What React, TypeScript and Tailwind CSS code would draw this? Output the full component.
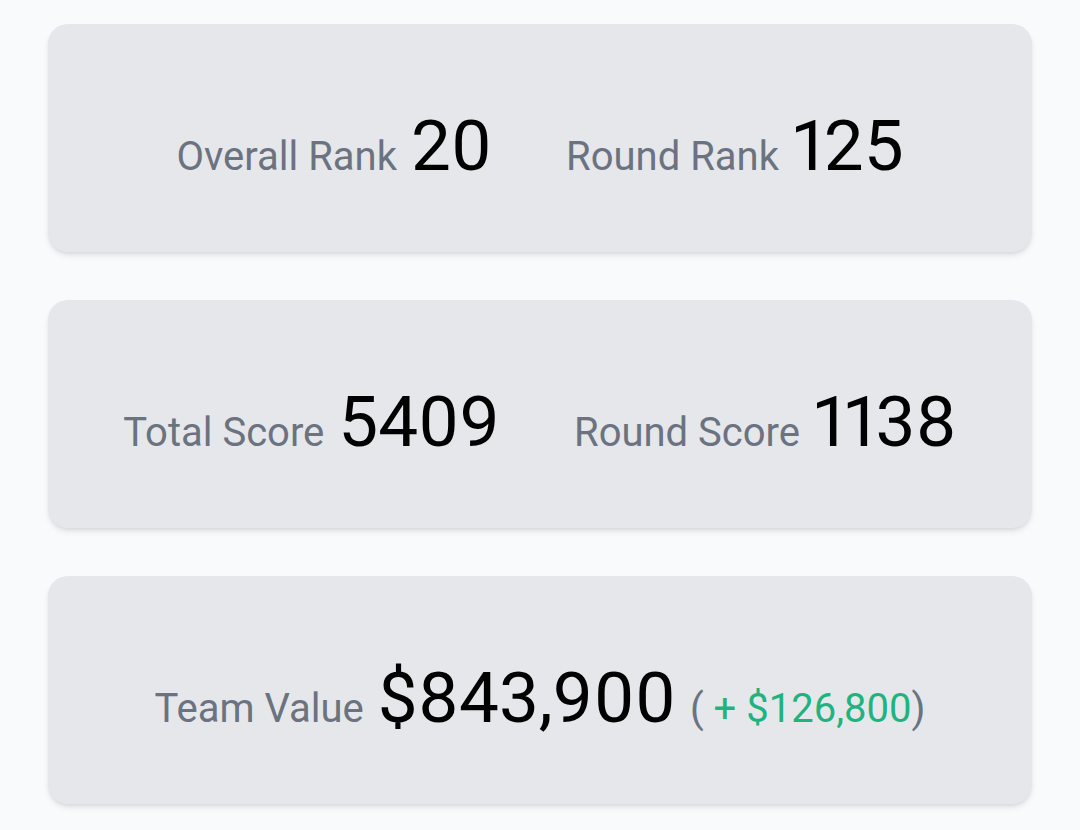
const Stat = ({ label, value }: { label: string; value: string }) => (
  <div className="flex items-baseline gap-[14px]">
    <span className="text-[40px] text-[#6b7280]">{label}</span>
    <span className="text-[71px] leading-none text-black proportional-nums">{value}</span>
  </div>
);

const Card = ({ children }: { children: React.ReactNode }) => (
  <div className="flex h-[228px] items-center justify-center rounded-[20px] bg-[#e5e7eb] pt-[20px] shadow-md">
    {children}
  </div>
);

const App = () => {
  return (
    <div
      className="flex min-h-[830px] flex-col gap-12 bg-[#f9fafb] px-12 pt-6"
      style={{ fontFamily: "Roboto, 'Liberation Sans', sans-serif" }}
    >
      <Card>
        <div className="flex items-baseline gap-[74px]">
          <Stat label="Overall Rank" value="20" />
          <Stat label="Round Rank" value="125" />
        </div>
      </Card>
      <Card>
        <div className="flex items-baseline gap-[74px]">
          <Stat label="Total Score" value="5409" />
          <Stat label="Round Score" value="1138" />
        </div>
      </Card>
      <Card>
        <div className="flex items-baseline gap-[14px]">
          <Stat label="Team Value" value="$843,900" />
          <span className="text-[40px] text-[#6b7280]">
            ( <span className="text-[#1fb37f]">+ $126,800</span>)
          </span>
        </div>
      </Card>
    </div>
  );
};

export default App;
